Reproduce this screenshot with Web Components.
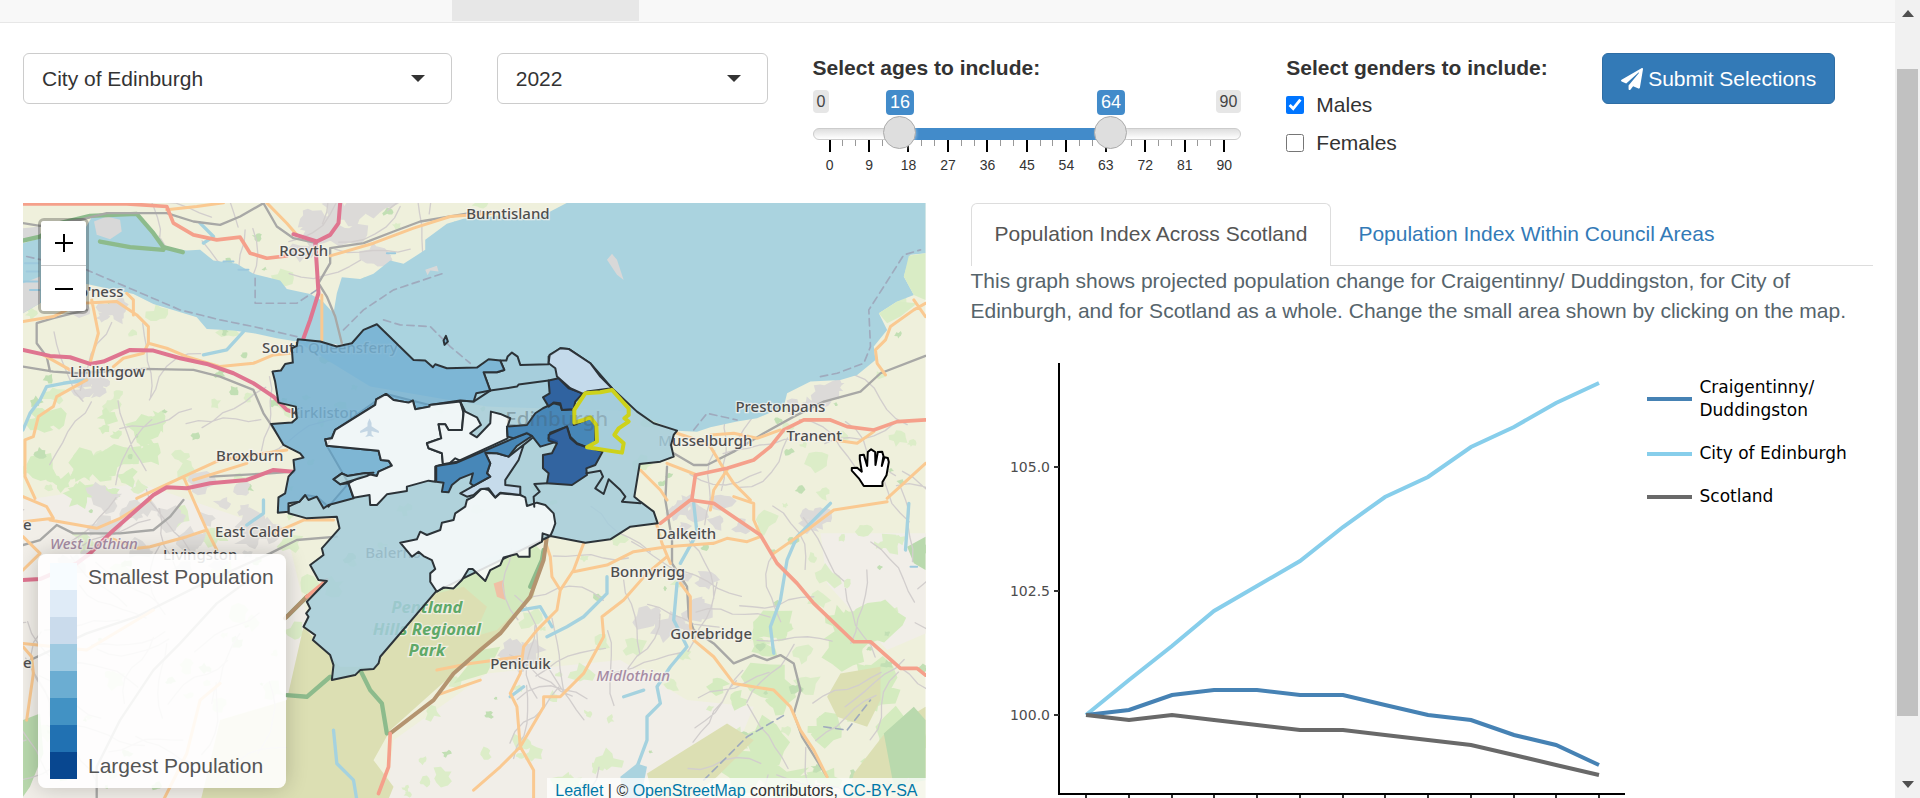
<!DOCTYPE html>
<html lang="en">
<head>
<meta charset="utf-8">
<title>Population projections</title>
<style>
html, body { margin: 0; height: 100%; overflow: hidden; }
body { background: #fff; color: #333; font: 21px/30px "Liberation Sans", Arial, sans-serif; }
</style>
</head>
<body>
<page-shell>
  <nav-strip slot="nav"></nav-strip>
  <filter-row>
    <select-field class="three" label="Council area" options="City of Edinburgh|Aberdeen City|Glasgow City"></select-field>
    <select-field class="two" label="Year" options="2022|2023|2024"></select-field>
    <age-slider class="three" min="0" max="90" low="16" high="64">Select ages to include:</age-slider>
    <gender-group class="two">Select genders to include:</gender-group>
    <submit-button class="two">Submit Selections</submit-button>
  </filter-row>
  <result-row>
    <area-map></area-map>
    <tab-panel>
      <span slot="first">Population Index Across Scotland</span>
      <span slot="second">Population Index Within Council Areas</span>
      <span slot="intro">This graph shows projected population change for Craigentinny/ Duddingston, for City of Edinburgh, and for Scotland as a whole. Change the small area shown by clicking on the map.</span>
      <index-chart></index-chart>
    </tab-panel>
  </result-row>
</page-shell>

<script>
const define = (name, html, ready) => customElements.define(name, class extends HTMLElement {
  constructor() {
    super();
    this.attachShadow({ mode: 'open' });
  }
  connectedCallback() {
    this.shadowRoot.innerHTML = typeof html === 'function' ? html(this) : html;
    if (ready) ready(this);
  }
});

define('scroll-track', `
<style>
:host { display: flex; flex-direction: column; align-items: center; background: #f1f1f1; width: 25px; height: 100%; padding: 10px 0; box-sizing: border-box; gap: 10px; }
svg { display: block; flex: none; }
.track { flex: 1; width: 21px; display: flex; flex-direction: column; }
.before { flex: 42; } .thumb { flex: 649; background: #c1c1c1; } .after { flex: 55; }
</style>
<svg width="12" height="7"><path d="M0 7 6 0l6 7z" fill="#505050"/></svg>
<div class="track"><div class="before"></div><div class="thumb"></div><div class="after"></div></div>
<svg width="12" height="7"><path d="M0 0h12L6 7z" fill="#505050"/></svg>`);

define('page-shell', `
<style>
:host { display: grid; grid-template-columns: minmax(0, 1fr) 25px; height: 100vh; overflow: hidden; }
main { overflow: hidden; }
.content { padding: 0 22px 0 23px; display: grid; }
</style>
<main><slot name="nav"></slot><div class="content"><slot></slot></div></main>
<scroll-track></scroll-track>`);

define('nav-strip', `
<style>
:host { display: block; background: #f8f8f8; border-bottom: 1px solid #e7e7e7; }
nav { display: grid; grid-template-columns: 452px 187px; height: 22px; }
i { grid-column: 2; background: #e7e7e7; height: 21px; }
</style>
<nav aria-label="Main"><i></i></nav>`);

define('filter-row', `
<style>
:host { display: grid; grid-template-columns: repeat(12, minmax(0, 1fr)); column-gap: 45px; align-items: start; padding-top: 30px; height: 150px; box-sizing: border-box; }
::slotted(.three) { grid-column: span 3; }
::slotted(.two) { grid-column: span 2; }
</style><slot></slot>`);

define('select-field', el => `
<style>
:host { display: grid; align-items: center; }
select { grid-area: 1 / 1; appearance: none; width: 100%; height: 51px; margin: 0; padding: 0 18px; border: 1px solid #ccc; border-radius: 6px; background: #fff; font: inherit; color: #333; }
svg { grid-area: 1 / 1; justify-self: end; margin-right: 27px; pointer-events: none; }
</style>
<select aria-label="${el.getAttribute('label')}">${el.getAttribute('options').split('|').map(o => `<option>${o}</option>`).join('')}</select>
<svg width="14" height="7"><path d="M0 0h14L7 7z" fill="#333"/></svg>`);

define('age-slider', el => {
  const max = +el.getAttribute('max'), low = +el.getAttribute('low'), high = +el.getAttribute('high');
  const ticks = Array.from({ length: 31 }, (_, i) => `<i class="${i % 3 ? '' : 'major'}"></i>`).join('');
  const nums = Array.from({ length: 11 }, (_, i) => `<span>${i * 9}</span>`).join('');
  return `
<style>
:host { display: block; --low: ${low / max}; --high: ${high / max}; }
b { display: block; }
.tips { position: relative; display: flex; justify-content: space-between; align-items: start; height: 25px; margin-top: 7px; line-height: 23px; font-size: 16px; }
.end { background: #e6e6e6; color: #444; border-radius: 4px; padding: 0 4px; }
.tip { position: absolute; top: 0; transform: translateX(-50%); background: #428bca; color: #fff; border-radius: 4px; padding: 0 4px; font-size: 18px; line-height: 25px; }
.low { left: calc(17px + (100% - 33px) * var(--low)); } .high { left: calc(17px + (100% - 33px) * var(--high)); }
.bar { display: grid; margin-top: 1px; height: 33px; align-items: center; }
.bar > * { grid-area: 1 / 1; }
.rail { height: 12px; box-sizing: border-box; border: 1px solid #ccc; border-radius: 12px; background: linear-gradient(#dedede, #fff); margin-top: 2px; }
.fill { height: 12px; background: #428bca; margin: 2px calc(16px + (100% - 33px) * (1 - var(--high))) 0 calc(16px + (100% - 33px) * var(--low)); }
input { appearance: none; background: none; width: 100%; height: 33px; margin: 0; pointer-events: none; z-index: 1; }
input::-webkit-slider-thumb { appearance: none; width: 33px; height: 33px; box-sizing: border-box; border: 1px solid #ababab; border-radius: 50%; background: #dedede; box-shadow: 1px 1px 3px rgba(255,255,255,.3); pointer-events: auto; }
.ticks { display: flex; justify-content: space-between; margin: -9px 16px 0; height: 14px; }
.ticks i { width: 1px; height: 6px; background: #999; }
.ticks .major { width: 2px; height: 12px; background: #000; }
.nums { display: flex; justify-content: space-between; margin: 0 17px; font-size: 14px; line-height: 22px; }
.nums span { width: 0; display: flex; justify-content: center; }
</style>
<b><slot></slot></b>
<div class="tips"><span class="end">${el.getAttribute('min')}</span><span class="end">${max}</span><span class="tip low">${low}</span><span class="tip high">${high}</span></div>
<div class="bar"><div class="rail"></div><div class="fill"></div>
<input type="range" min="0" max="${max}" value="${low}" aria-label="Lowest age"><input type="range" min="0" max="${max}" value="${high}" aria-label="Highest age"></div>
<div class="ticks">${ticks}</div><div class="nums">${nums}</div>`;
});

define('gender-group', `
<style>
:host { display: block; white-space: nowrap; }
fieldset { border: 0; margin: 0; padding: 0; min-width: 0; }
legend { padding: 0; font-weight: bold; margin-bottom: 7px; }
label { display: flex; align-items: center; gap: 12px; margin-bottom: 8px; }
input { width: 18px; height: 18px; margin: 0; accent-color: #0075ff; }
</style>
<fieldset><legend><slot></slot></legend>
<label><input type="checkbox" checked>Males</label>
<label><input type="checkbox">Females</label></fieldset>`);

define('submit-button', `
<style>
:host { display: block; }
button { display: flex; align-items: center; gap: 5px; height: 51px; padding: 0 18px; margin: 0; border: 1px solid #2e6da4; border-radius: 6px; background: #337ab7; color: #fff; font: inherit; white-space: nowrap; }
</style>
<button type="submit"><svg width="22" height="22" viewBox="0 0 512 512" fill="#fff"><path d="M476 3.2L12.5 270.6c-18.1 10.4-15.8 35.6 2.2 43.2L121 358.4l287.3-253.2c5.5-4.9 13.3 2.6 8.6 8.3L176 407v80.5c0 23.6 28.5 32.9 42.5 15.8L282 426l124.6 52.2c14.2 6 30.4-2.9 33-18.2l72-432C515 7.8 493.3-6.8 476 3.2z"/></svg><span><slot></slot></span></button>`);

define('result-row', `
<style>
:host { display: grid; grid-template-columns: repeat(2, minmax(0, 1fr)); column-gap: 45px; align-items: start; padding-top: 30px; }
</style><slot></slot>`);

define('tab-panel', `
<style>
:host { display: block; }
nav { display: flex; gap: 3px; border-bottom: 1px solid #ddd; white-space: nowrap; }
a { padding: 15px 23px 16px; border: 1px solid transparent; border-bottom: 0; text-decoration: none; color: #337ab7; }
a.on { color: #555; background: #fff; border-color: #ddd; border-radius: 6px 6px 0 0; padding-bottom: 17px; margin-bottom: -1px; }
p { margin: 0 0 20px; color: #56646b; }
</style>
<nav><a class="on" href="#scotland"><slot name="first"></slot></a><a href="#council"><slot name="second"></slot></a></nav>
<p><slot name="intro"></slot></p>
<slot></slot>`);

/* ---------- line chart ---------- */
define('index-chart', () => {
  const series = [
    ['#87ceeb', [100, 100.7, 101.4, 102.1, 102.6, 103.1, 103.8, 104.4, 104.8, 105.4, 105.8, 106.3, 106.7]],
    ['#4682b4', [100, 100.1, 100.4, 100.5, 100.5, 100.4, 100.4, 100.2, 100, 99.9, 99.6, 99.4, 99]],
    ['#696969', [100, 99.9, 100, 99.9, 99.8, 99.7, 99.7, 99.6, 99.5, 99.4, 99.2, 99, 98.8]]
  ];
  const x = i => Math.round(115 + i * 513 / 12);
  const y = v => Math.round(369 - (v - 100) * 248 / 5);
  const lines = series.map(([c, vals]) => `<polyline points="${vals.map((v, i) => x(i) + ',' + y(v)).join(' ')}" fill="none" stroke="${c}" stroke-width="4"/>`).join('');
  const yt = [100, 102.5, 105].map(v => `<path d="M83 ${y(v)}h5" stroke="#333" stroke-width="2"/><text x="79" y="${y(v) + 5}" text-anchor="end">${v.toFixed(1)}</text>`).join('');
  const xt = series[0][1].map((_, i) => `<path d="M${x(i)} 449v5" stroke="#333" stroke-width="2"/>`).join('');
  return `
<style>
:host { display: grid; grid-template-columns: 654px minmax(0, 1fr); column-gap: 22px; font-family: "DejaVu Sans", Verdana, sans-serif; }
svg { display: block; }
text { font-size: 14px; fill: #4d4d4d; }
ul { list-style: none; margin: 0; padding: 30px 0 0; display: grid; gap: 20px; align-content: start; color: #000; font-size: 17px; line-height: 23px; }
li { display: flex; align-items: center; gap: 8px; }
li::before { content: ""; width: 45px; height: 4px; background: var(--c); flex: none; }
</style>
<svg width="654" height="460" role="img" aria-label="Population index">
<path d="M88 17V448H654" fill="none" stroke="#000" stroke-width="2"/>${yt}${xt}${lines}</svg>
<ul><li style="--c:#4682b4"><span>Craigentinny/<br>Duddingston</span></li><li style="--c:#87ceeb"><span>City of Edinburgh</span></li><li style="--c:#696969"><span>Scotland</span></li></ul>`;
});

/* ---------- map: drawn at three units to the pixel ---------- */
const line = (pts, dx = 0, dy = 0) => pts.trim().split(/\s+/).map((p, i) => {
  const [a, b] = p.split(',').map(Number);
  return (i ? 'L' : 'M') + (a + dx) + ' ' + (b + dy);
}).join('');
const roads = (cls, list, dx, dy) => `<path class="${cls}" d="${list.map(p => line(p, dx, dy)).join('')}"/>`;

let seed = 11;
const rnd = () => (seed = (seed * 16807) % 2147483647) / 2147483647;
const blob = (cx, cy, r) => {
  const n = 11;
  let d = '';
  for (let i = 0; i < n; i++) {
    const a = i / n * Math.PI * 2, k = r * (0.4 + rnd() * 0.8);
    d += (i ? 'L' : 'M') + Math.round(cx + Math.cos(a) * k * 1.2) + ' ' + Math.round(cy + Math.sin(a) * k);
  }
  return d + 'Z';
};
const scatter = (fill, count, x0, y0, x1, y1, r0, r1) => {
  let d = '';
  for (let i = 0; i < count; i++) d += blob(x0 + rnd() * (x1 - x0), y0 + rnd() * (y1 - y0), r0 + rnd() * (r1 - r0));
  return `<path d="${d}" fill="${fill}"/>`;
};
const lanes = (count, x0, y0, x1, y1) => {
  let d = '';
  for (let i = 0; i < count; i++) {
    let px = x0 + rnd() * (x1 - x0), py = y0 + rnd() * (y1 - y0), a = rnd() * 6.28;
    d += `M${Math.round(px)} ${Math.round(py)}`;
    for (let j = 0; j < 6; j++) {
      a += (rnd() - 0.5) * 0.8;
      px += Math.cos(a) * 38; py += Math.sin(a) * 38;
      d += `L${Math.round(px)} ${Math.round(py)}`;
    }
  }
  return `<path class="lane" d="${d}"/>`;
};

const towns = [
  [279, 256, 'Rosyth'], [70, 377, 'Linlithgow'], [69, 297, "Bo'ness"], [466, 219, 'Burntisland'],
  [262, 353, 'South Queensferry'], [290, 418, 'Kirkliston'], [216, 461, 'Broxburn'], [215, 537, 'East Calder'],
  [163, 560, 'Livingston'], [658, 446, 'Musselburgh'], [735, 412, 'Prestonpans'], [786, 441, 'Tranent'],
  [656, 539, 'Dalkeith'], [610, 577, 'Bonnyrigg'], [670, 639, 'Gorebridge'], [490, 669, 'Penicuik'],
  [365, 558, 'Balerno'], [23, 530, 'e'], [23, 668, 'e']
].map(([x, y, t]) => `<text x="${(x - 20) * 3}" y="${(y - 200) * 3}">${t}</text>`).join('');

const W = '#fafcfc', L = '#a5cddb', N = '#76b1d3', M = '#357ab2', D = '#1d5196', P = '#cadcee';
const areas = [
  [L, '85,590 118,575 135,555 170,560 205,590 265,520 200,407 225,360 378,252 508,285 600,272 640,275 690,242 670,187 710,187 732,180 720,152 738,152 742,140 755,128 772,140 780,165 865,163 865,140 900,115 925,117 990,160 1055,235 1130,305 1180,340 1250,362 1240,375 1232,405 1240,440 1200,455 1138,462 1122,560 1140,575 1180,605 1192,640 1110,650 1050,688 975,698 870,678 527,845 360,1040 355,1060 340,1077 300,1080 285,1095 215,1110 220,1065 210,1035 158,990 165,975 130,950 145,920 138,910 150,895 140,875 200,813 175,810 150,765 190,735 185,715 238,655 230,620 140,625 85,610'],
  [N, '113,88 180,95 230,110 275,100 310,60 350,43 460,150 495,152 518,172 525,163 560,175 650,173 685,148 720,152 732,180 710,187 670,187 690,242 648,250 640,275 600,272 508,285 508,290 465,298 458,272 445,278 400,270 378,252 348,268 345,285 225,360 215,385 195,388 200,407 355,422 362,450 385,452 395,467 355,485 350,498 315,490 262,498 245,490 220,508 240,523 265,520 280,565 205,585 190,595 170,560 145,570 135,555 118,575 85,580 85,605 53,608 55,562 75,550 85,500 103,480 100,450 130,443 120,430 70,405 33,342 95,338 110,325 107,290 55,278 45,215 37,185 62,182 75,162 98,158 95,115 110,108'],
  [W, '378,252 400,270 445,278 458,272 465,298 508,290 508,285 600,275 610,300 605,360 565,360 555,343 535,343 543,385 500,400 505,415 545,430 548,463 525,470 525,515 505,512 440,530 440,543 380,553 350,585 330,585 328,555 280,563 265,520 315,490 350,498 355,485 395,467 385,452 362,450 355,422 200,407 195,388 215,385 225,360 345,285 348,268'],
  [W, '600,275 615,305 650,322 662,345 630,370 650,382 690,340 692,305 720,312 750,325 740,355 742,385 700,405 590,455 548,463 545,430 505,415 500,400 543,385 535,343 555,343 565,360 605,360 610,310'],
  [W, '420,698 455,740 475,725 490,738 515,750 525,777 510,790 510,815 530,845 550,832 580,835 605,810 625,777 637,777 675,813 690,780 720,765 730,742 770,732 775,740 808,740 808,715 845,695 847,670 870,678 878,660 885,640 880,610 855,585 830,578 800,588 795,562 780,555 720,550 705,563 685,540 665,535 640,560 620,570 615,590 585,610 580,630 545,638 540,660 500,675 480,665 470,688'],
  [P, '675,430 710,430 745,440 815,385 790,405 775,450 735,510 735,525 780,530 780,555 720,548 705,562 685,535 660,538 640,555 620,560 600,550 640,528 690,500 680,490 690,460'],
  [M, '528,468 590,458 800,368 815,378 770,408 745,440 710,430 675,428 690,460 680,490 690,500 640,528 630,520 638,490 600,505 575,525 565,547 545,545 550,518 528,515'],
  [M, '740,350 800,345 825,310 848,295 880,280 900,285 905,300 940,298 940,345 990,325 1005,345 1005,395 980,412 950,400 930,380 920,350 870,368 865,385 890,395 840,410 815,378 800,370 760,385 742,380'],
  [D, '865,212 895,205 925,235 968,250 945,275 940,298 905,300 900,280 880,278 865,290 848,262 868,250'],
  [D, '920,350 930,385 950,402 980,412 1027,425 1005,465 978,475 980,495 935,525 860,520 865,490 848,475 848,435 875,430 890,400 865,392 865,375'],
  [P, '868,135 900,115 925,117 990,160 1020,200 1055,235 980,245 968,252 930,235 890,200 885,175 865,160'],
  [N, '557,78 563,95 553,105 550,92']
].map(([c, p]) => `<path fill="${c}" d="${line(p, 720, 330)}Z"/>`).join('');

define('area-map', `
<style>
:host { display: grid; height: 600px; overflow: hidden; position: relative; }
.canvas { grid-area: 1 / 1; width: 100%; height: 600px; display: block; }
.canvas path { stroke-linejoin: round; stroke-linecap: round; }
.canvas text { font: 500 45px "Noto Sans", sans-serif; fill: #4e4e4e; stroke: #f5f3ee; stroke-width: 8px; stroke-opacity: .75; paint-order: stroke; }
.canvas .county { font-style: italic; fill: #a58ba3; }
.canvas .park { font: italic bold 50px "Noto Sans", sans-serif; fill: #5fa968; text-anchor: middle; }
.canvas .city { font-size: 62px; }
.lane, .m, .a, .b, .r, .w, .g, .t, .k { fill: none; }
.lane { stroke: #d2cecd; stroke-width: 4; }
.m { stroke: #df7590; stroke-width: 12; }
.a { stroke: #f5a08b; stroke-width: 11; }
.b { stroke: #fac991; stroke-width: 9; }
.r { stroke: #a8a8a6; stroke-width: 7; }
.w { stroke: #a5d2df; stroke-width: 10; }
.g { stroke: #8dbb8c; stroke-width: 13; }
.t { stroke: #b49470; stroke-width: 12; }
.k { stroke: #9faabd; stroke-width: 5; stroke-dasharray: 22 14; }
.areas path, .areas .edge { stroke: #2c3338; stroke-width: 6; }
.zoom { position: absolute; left: 15px; top: 15px; border: 3px solid rgba(0,0,0,.25); background-clip: padding-box; border-radius: 6px; }
.zoom button { display: grid; place-items: center; box-sizing: border-box; width: 45px; height: 45px; padding: 0; border: 0; background: #fff; border-radius: 0 0 3px 3px; }
.zoom button:first-child { border-bottom: 1px solid #ccc; border-radius: 3px 3px 0 0; }
.key { position: absolute; left: 15px; bottom: 15px; box-sizing: border-box; width: 248px; height: 234px; padding: 9px 12px; border-radius: 8px; background: rgba(255,255,255,.88); box-shadow: 0 0 22px rgba(0,0,0,.2); display: grid; grid-template-columns: 27px 1fr; grid-auto-rows: 27px; column-gap: 11px; line-height: 27px; color: #555; white-space: nowrap; }
.key i { grid-column: 1; }
.key span { grid-column: 2; grid-row: 1; }
.key span.last { grid-row: 8; }
.credit { position: absolute; right: 0; bottom: 0; padding: 0 8px; background: rgba(255,255,255,.75); font-size: 16px; line-height: 25px; white-space: nowrap; }
.credit a { color: #0078a8; text-decoration: none; }
</style>
<svg class="canvas" viewBox="9 9 2706 1800" preserveAspectRatio="xMidYMid slice" role="img" aria-label="Map of small areas in City of Edinburgh">
<rect x="9" y="9" width="2706" height="1800" fill="#eff0dc"/>
<path fill="#f1eee8" d="M9 900L360 850 800 1000 860 1250 800 1500 540 1800H9ZM1400 1420L1800 1380 2000 1500 2200 1520 2150 1640 1900 1800H1100L1120 1620ZM2400 1000L2715 1000V1300L2600 1350 2420 1150Z"/>
${scatter('#dcedc8', 190, 9, 9, 2715, 1800, 8, 36)}
${scatter('#d5ecc1', 28, 20, 640, 420, 900, 14, 50)}
${scatter('#d4ebbf', 34, 2080, 1250, 2700, 1750, 24, 80)}
${scatter('#c2dfb4', 110, 9, 9, 2715, 1800, 5, 18)}
${scatter('#dedcd9', 34, 120, 840, 760, 1100, 12, 42)}
${scatter('#dcdad8', 10, 740, 9, 1080, 230, 24, 60)}
${scatter('#dcdad8', 8, 180, 310, 320, 360, 14, 34)}
${scatter('#dcdad8', 8, 160, 530, 290, 580, 14, 30)}
${scatter('#dcdad8', 12, 1860, 1120, 2090, 1300, 16, 40)}
${scatter('#dcdad8', 6, 1440, 1290, 1530, 1400, 20, 40)}
${scatter('#dcdad8', 7, 2300, 550, 2450, 640, 16, 36)}
${scatter('#dcdad8', 7, 2330, 940, 2420, 1010, 12, 30)}
${scatter('#dcdad8', 9, 1940, 900, 2180, 1000, 18, 36)}
<path fill="#dcdfb3" d="M850 1280L960 1400 1060 1400 1240 1180 1350 1110 1420 1190 1520 1140 1560 1080 1540 1190 1440 1300 1300 1420 1110 1590 1060 1680 1120 1760 1100 1809H540L600 1560 800 1500ZM1880 1720L2120 1570 2200 1620 2090 1730 2000 1800H1900ZM2420 1490L2460 1420 2580 1400 2580 1500 2540 1580 2450 1550ZM2500 1720L2600 1590 2715 1520V1809H2480Z"/>
<path fill="#d3e9bd" d="M1250 1180L1380 1080 1540 1030 1570 1060 1520 1200 1430 1290 1360 1310 1400 1220 1330 1160ZM1380 1350L1440 1340 1400 1420 1300 1450Z"/>
<path fill="#b9d9ad" d="M2590 1600L2680 1520 2715 1560V1740L2620 1760ZM9 1560L60 1540 70 1660 30 1760 9 1790ZM2660 1040L2715 1010V1110L2680 1090Z"/>
<path fill="#f0c0a5" d="M1420 1150L1450 1140 1455 1200 1430 1190Z"/>
${lanes(46, 9, 520, 760, 1750)}
${lanes(16, 380, 9, 1250, 200)}
${lanes(48, 1480, 1050, 2700, 1760)}
${lanes(16, 2050, 600, 2700, 1000)}
<path fill="#aad3df" d="M9 130L60 115 190 95 215 52 290 38 355 46 400 92 430 142 500 152 540 150 580 182 650 192 700 222 780 242 800 267 870 282 905 302 940 340 950 280 965 232 1020 237 1060 222 1110 182 1150 192 1215 150 1215 120 1280 72 1330 57 1380 52 1460 48 1520 60 1580 40 1640 9H2715V160L2670 165 2650 230 2680 285 2630 305 2575 340 2600 390 2560 440 2565 480 2510 525 2460 540 2370 545 2300 580 2290 620 2210 655 2150 665 2070 682 2030 695 1970 692 1900 665 1850 635 1400 620 1050 560 830 425 770 415 700 400 640 392 560 387 530 352 400 312 340 282 200 252 60 310 9 340Z"/>
<path fill="#d8d8d8" d="M222 65L260 50 300 60 305 95 270 118 230 105ZM9 85L60 80 60 110 9 120ZM9 250L60 230 60 310 9 340ZM1215 210L1250 198 1255 215 1230 212 1222 226ZM1760 180L1775 162 1790 180 1810 240 1790 225Z"/>
<path fill="#d9ecc5" d="M2650 230L2665 168 2715 160V300L2680 285ZM2575 340L2630 305 2690 310 2640 350 2600 370Z"/>
<path fill="none" stroke="#9dc9dd" stroke-width="6" d="M15 190h40M20 215h35M12 245h40M30 270h30M610 185h30M655 210h30M1100 160h25M2670 1100h20"/>
${roads('g', ['9,122 60,110 120,70 210,48 350,42 400,100 430,142 488,157', '240,125 330,142 430,150', '1020,1410 1050,1470 1085,1510 1100,1600', '930,1430 860,1490 800,1485', '800,1250 860,1190', '1570,1050 1565,1080 1530,1160'])}
${roads('w', ['9,690 30,640 60,600 80,560 130,550 200,540', '940,1590 950,1690 1000,1740 1010,1800', '550,465 620,450 670,395', '730,900 730,940 680,975', '540,70 580,110 550,130'])}
${roads('w', ['590,250 580,360 620,440 570,500 530,560 540,610 500,650 500,720 470,800', '380,230 380,280 310,350 260,380 200,410', '1285,10 1275,150', '640,10 650,100 600,190', '1050,10 950,110 920,180 900,300 870,380 880,460', '120,330 180,320 215,380', '90,590 130,560', '430,590 490,570'], 1380, 900)}
<path fill="#aad3df" d="M1800 1730L1850 1690 1880 1700 1860 1800H1810Z"/>
${roads('k', ['20,170 200,210 270,240 480,330 600,360 700,380 830,410', '705,235 705,310 830,310 890,270', '970,390 1030,330 1120,270 1270,220', '1090,360 1140,375 1230,380 1290,440 1350,490', '2020,690 2060,640 2150,660', '2400,530 2450,520 2530,490 2550,440 2545,330 2590,260 2650,165 2700,150', '2050,1740 2180,1610 2300,1540', '2410,1580 2480,1590 2550,1500'])}
${roads('r', ['9,500 100,515 170,520 370,507 520,510 600,530 700,570 730,640 790,730', '9,70 60,78 180,60 260,40 440,40 520,65 600,75 660,50 730,10 770,80 820,115 890,130', '930,145 930,190 895,250 920,290 945,350 965,430', '930,145 1030,130 1120,95 1200,65 1380,35', '200,330 100,355 50,370 50,430 80,470 90,515', '9,1035 60,1020 110,975 160,1000 300,1000 400,990 450,950 490,900', '9,1390 200,1300 350,1250 550,1150 750,1060 830,1020 950,1010', '230,1800 230,1700 300,1560 400,1410 480,1330 590,1210 700,1130', '2715,468 2580,520 2520,575 2410,605 2320,650 2230,700 2140,755 2060,795 2020,795 1960,760', '570,830 750,820 820,815', '1940,800 1935,900 1955,1020 1955,1090 2000,1160 2005,1250 2020,1290 2080,1330 2140,1390 2200,1365 2240,1380 2280,1365 2320,1390 2340,1470 2320,1540 2345,1610 2420,1730'])}
${roads('b', ['440,30 530,20 610,9', '740,9 800,70 830,105', '930,168 1060,130 1180,85 1290,50 1420,40', '905,285 905,420', '215,300 235,400 210,490', '9,365 100,350 180,310 290,305 350,345 385,380 385,430 440,445 500,470 600,500 700,490 760,465 810,460', '320,280 340,300 340,345', '385,430 370,460 310,475 280,500', '70,465 150,510', '200,540 110,590 100,620 55,650 40,710 15,720 15,830 45,895', '350,895 490,830 600,780 800,750', '490,830 520,900 560,990 590,1050', '520,840 680,790', '9,965 100,955 80,920 9,890', '90,960 230,985 300,955 390,900', '9,1110 60,1060 9,1010', '20,1560 40,1420 35,1370 9,1340', '260,1010 350,1045 390,1040 500,1010 560,990', '760,1000 850,960 940,960', '430,1800 500,1660 540,1500 600,1450', '1250,1485 1380,1440', '9,1330 200,1350 400,1230'])}
${roads('b', ['1335,310 1300,330 1230,380 1215,420 1185,450 1190,490 1215,525', '590,700 650,720 690,740 720,790 760,850 810,900', '1335,790 1220,895', '480,810 540,870 560,900', '690,705 760,700 830,715 900,690', '1060,720 1130,730 1180,695', '560,790 650,825', '740,810 700,870 690,930', '700,1030 740,1015 800,1025 840,1010', '880,1060 980,990 1060,930 1220,905', '190,1010 210,1070 215,1130 240,1170 230,1230 170,1290 130,1340 120,1420 90,1480 110,1520 120,1640 160,1710 160,1800', '240,1170 280,1110 310,1030', '280,1115 380,1095 460,1055 560,1040 700,1030', '-130,1410 -30,1390 120,1370', '560,1070 500,1120 430,1200 365,1250 370,1310 310,1420 240,1490 190,1490 190,1520 120,1640 60,1700 -20,1770', '600,1150 630,1190 630,1280 640,1320 700,1370 760,1450 880,1470 930,1520 960,1590 1000,1650 1040,1730', '525,960 545,1030 570,1090', '840,1005 820,960 820,910 760,890', '1300,300 1335,350'], 1380, 0)}
${roads('t', ['1580,1010 1570,1080 1530,1190 1440,1300 1380,1350 1300,1420 1240,1500 1110,1600', '795,1255 860,1190'])}
${roads('a', ['9,12 130,12 320,12 440,20 460,70 520,105 590,120 660,112 690,160 740,175 800,168', '1110,1600 1105,1700 1075,1780', '860,1190 920,1140', '2715,660 2630,665 2560,690 2480,680 2430,660 2350,660 2290,690 2250,740 2200,780 2120,805 2025,825 2015,895', '1920,970 2010,900 2080,910 2220,1005 2270,1090 2330,1150 2380,1210 2500,1325 2550,1325 2640,1405 2690,1405 2715,1425'])}
${roads('m', ['9,450 90,468 150,472 210,492 250,485 330,450 400,452 480,475 560,492 640,520 700,550 760,590 800,630 830,640', '960,9 955,70 930,105 890,125 820,103', '885,125 890,200 895,280 870,360 850,415', '820,815 760,810 680,840 570,850 500,865 440,862 400,885 270,1000 210,1060 170,1090 60,1137 9,1140'])}
${towns}
<text class="county" x="90" y="1047">West Lothian</text><text class="county" x="1728" y="1443">Midlothian</text>
<text class="park" x="1220" y="1239">Pentland</text><text class="park" x="1220" y="1304">Hills Regional</text><text class="park" x="1220" y="1367">Park</text>
<text class="city" x="1455" y="678">Edinburgh</text>
<g class="areas" fill-opacity=".86">${areas}
<path class="edge" fill="none" d="${line('690,242 770,230 775,224 865,212', 720, 330)}${line('978,490 1020,482 1028,500 1005,535 1030,552 1045,508 1080,540 1095,560 1085,575 1140,580', 720, 330)}${line('860,520 822,522 838,545 820,560 822,590', 720, 330)}${line('570,458 585,445 600,452', 720, 330)}"/>
<path fill="${L}" d="${line('220,508 245,490 262,498 310,490 340,488 320,498 240,523', 720, 330)}Z"/></g>
<path fill="#a5cddb" fill-opacity=".8" stroke="#cdd21b" stroke-width="12" d="${line('975,250 1020,247 1055,240 1105,295 1105,315 1092,325 1105,335 1075,355 1062,375 1090,400 1085,428 980,412 1010,395 1008,345 990,322 970,330 942,338 942,300', 720, 330)}Z"/>
<path fill="#8fb0cb" fill-opacity=".45" d="M1048 655l6 14v10l22 14v6l-22-6v10l7 8-13-3-13 3 7-8v-10l-22 6v-6l22-14v-10z"/>
<text class="city" x="1455" y="678" fill-opacity=".22" stroke="none" style="stroke:none">Edinburgh</text>
<path fill="#fff" stroke="#000" stroke-width="6" d="M2530 858L2515 835 2494 812V804L2510 803 2524 815 2518 778V766L2530 764 2540 798 2542 756 2552 748 2564 756 2565 795 2572 756 2585 755 2589 768 2584 798 2592 772 2602 774 2605 786 2598 826 2586 846V858Z"/>
</svg>
<div class="zoom"><button aria-label="Zoom in"><svg width="18" height="18"><path d="M9 0v18M0 9h18" stroke="#000" stroke-width="2"/></svg></button><button aria-label="Zoom out"><svg width="18" height="18"><path d="M0 9h18" stroke="#000" stroke-width="2"/></svg></button></div>
<div class="key"><i style="background:#f7fcff"></i><i style="background:#dfebf7"></i><i style="background:#cadbec"></i><i style="background:#9fcae1"></i><i style="background:#6badd2"></i><i style="background:#4292c4"></i><i style="background:#2171b2"></i><i style="background:#084790"></i><span>Smallest Population</span><span class="last">Largest Population</span></div>
<div class="credit"><a href="#leaflet">Leaflet</a> | © <a href="#osm">OpenStreetMap</a> contributors, <a href="#licence">CC-BY-SA</a></div>`);
</script>
</body>
</html>
